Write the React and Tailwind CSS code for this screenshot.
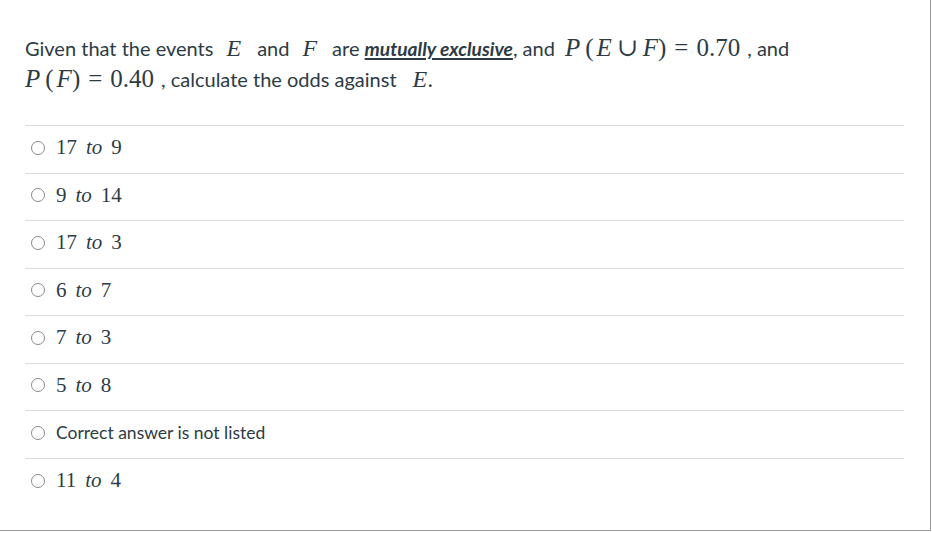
const options = [
  { a: '17', b: '9' },
  { a: '9', b: '14' },
  { a: '17', b: '3' },
  { a: '6', b: '7' },
  { a: '7', b: '3' },
  { a: '5', b: '8' },
  { text: 'Correct answer is not listed' },
  { a: '11', b: '4' },
]

const M = ({ children, className = '' }) => (
  <span className={`font-['Liberation_Serif','DejaVu_Serif',serif] ${className}`}>{children}</span>
)
const V = ({ children, className = '' }) => <span className={`italic ${className}`}>{children}</span>
const Eq = () => <span className="mx-[8px]">=</span>

function Radio() {
  return <span className="inline-block h-[14px] w-[14px] shrink-0 rounded-full border border-[#8a8a8a] bg-white" />
}

export default function App() {
  return (
    <div className="h-[531px] w-[931px] border-r border-b border-[#9a9a9a] bg-white font-['Lato','Noto_Sans',sans-serif] text-[#2d3b45]">
      <div className="pl-[25px] pr-[26px] pt-[33px]">
        <p className="text-[20px] leading-[30px]">
          Given that the events<M className="ml-[13px] mr-[16px] text-[24px]"><V>E</V></M>and
          <M className="ml-[13px] mr-[15px] text-[24px]"><V>F</V></M>are{' '}
          <a className="text-[19.2px] font-bold italic underline decoration-2 underline-offset-2">mutually exclusive</a>, and
          <M className="ml-[10px] mr-[7px] text-[25px]">
            <V className="mr-[5px]">P</V>(<V className="ml-[3px]">E</V>
            <span className="mx-[5px]">∪</span>
            <V>F</V>)<Eq />0.70
          </M>
          , and
          <br />
          <M className="mr-[7px] text-[25px]">
            <V className="mr-[5px]">P</V>(<V className="ml-[3px]">F</V>)<Eq />0.40
          </M>
          , calculate the odds against<M className="ml-[16px] text-[24px]"><V>E</V>.</M>
        </p>
        <ul className="mt-[31px] border-t border-[#dcdcdc]">
          {options.map((o, i) => (
            <li key={i} className="flex h-[47.5px] items-center gap-[11px] border-b border-[#dcdcdc] pb-[3px] pl-[6px] last:border-b-0">
              <Radio />
              {o.text ? (
                <span className="text-[17.5px]">{o.text}</span>
              ) : (
                <M className="text-[21px]">
                  {o.a}
                  <span className="mx-[9px] italic">to</span>
                  {o.b}
                </M>
              )}
            </li>
          ))}
        </ul>
      </div>
    </div>
  )
}
